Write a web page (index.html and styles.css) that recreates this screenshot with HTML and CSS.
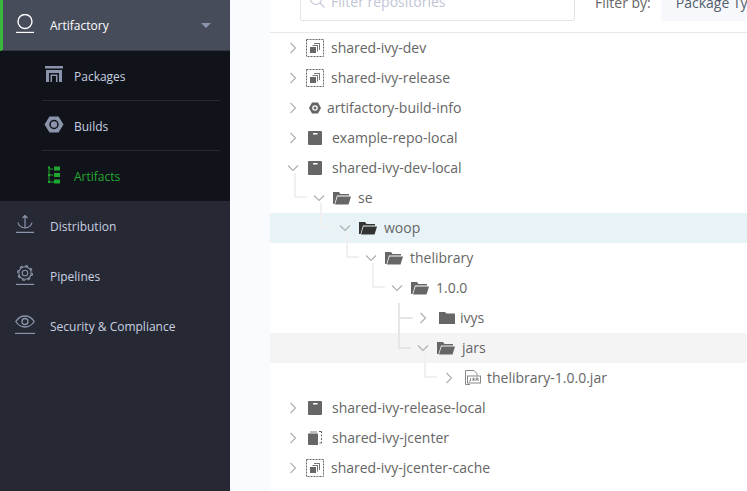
FILE: index.html
```html
<!DOCTYPE html>
<html lang="en">

<head>
    <meta charset="UTF-8">
    <title>Artifacts</title>
    <link rel="stylesheet" href="styles.css">
</head>

<body>
    <svg class="defs" width="0" height="0">
        <symbol id="chev-right" viewBox="0 0 10 14"><path d="M2.500 2 7.500 7 2.500 12" fill="none" stroke="#b0b0b0" stroke-width="1.200"/></symbol>
        <symbol id="chev-down" viewBox="0 0 14 10"><path d="M2 2.500 7 7.500 12 2.500" fill="none" stroke="#b0b0b0" stroke-width="1.200"/></symbol>
        <symbol id="virtual" viewBox="0 0 18 18">
            <rect x=".5" y=".5" width="17" height="17" fill="none" stroke="#666" stroke-dasharray="2 1"/>
            <path d="M8 4h6v7h-1V5H8z" fill="#777"/>
            <path d="M6.500 6H12v6.500H11V7H6.500z" fill="#777"/>
            <rect x="4" y="8" width="6" height="6" fill="#666"/>
        </symbol>
        <symbol id="remote" viewBox="0 0 14 14">
            <path d="M0 2.500h10V14H1a1 1 0 0 1-1-1z" fill="#666"/>
            <path d="M11 .5h2.500v1.500M13.500 3.500v2M13.500 7v2M13.500 10.500v1.500h-2" fill="none" stroke="#666"/>
            <path d="M2 .5h7v1H2z" fill="#777"/>
        </symbol>
        <symbol id="local" viewBox="0 0 14 14"><path d="M1 0h12a1 1 0 0 1 1 1v12a1 1 0 0 1-1 1H1a1 1 0 0 1-1-1V1a1 1 0 0 1 1-1z" fill="#666"/><rect x="5" y="2" width="4.500" height="1.500" fill="#fff"/></symbol>
        <symbol id="build" viewBox="0 0 12 12"><path d="M3 .5h6L12 6 9 11.500H3L0 6z" fill="#666"/><circle cx="6" cy="6" r="2.800" fill="#fff"/><circle cx="6" cy="6" r="1.500" fill="#666"/></symbol>
        <symbol id="folder-open" viewBox="0 0 18 14"><path d="M0 1h6l1.500 2H16v1.500H4L1.500 13H0z" fill="currentColor"/><path d="M4.500 5.500H18L15.500 13.500H2z" fill="currentColor"/></symbol>
        <symbol id="folder" viewBox="0 0 16 12"><path d="M0 0h6l1.500 1.500H16V12H0z" fill="#666"/></symbol>
        <symbol id="jar" viewBox="0 0 17 16">
            <path d="M10 .5H1.500v14H6M10 .5 13 3.500v2" fill="none" stroke="#888"/>
            <rect x="3.500" y="6" width="13" height="7" fill="#fff" stroke="#888"/>
            <path d="M6.500 8v3H5M9 11V8h1v3M9 9.500h1M12 11V8h2v1.500h-2M14 9.500 14.500 11" fill="none" stroke="#777" stroke-width=".8"/>
        </symbol>
    </svg>

    <div class="app">
        <nav class="sidebar">
            <div class="module active">
                <svg class="module-icon" viewBox="0 0 18 19" width="18" height="19"><circle cx="9" cy="7.500" r="7" fill="none" stroke="#fff" stroke-width="1.400"/><path d="M0 18.400h18" stroke="#fff" stroke-width="1.200"/></svg>
                <span>Artifactory</span>
                <i class="caret"></i>
            </div>
            <div class="submenu">
                <div class="sub-item">
                    <svg viewBox="0 0 18 16" width="18" height="16"><path d="M0 0h18v2.500H0z" fill="#8a94ab"/><path d="M1 4h16v12h-3V7H4v9H1z" fill="#8a94ab"/><path d="M5.500 8.500h7V16H11v-6H7v6H5.500z" fill="#8a94ab"/></svg>
                    <span>Packages</span>
                </div>
                <div class="sub-item">
                    <svg viewBox="0 0 19 17" width="19" height="17"><path d="M5 .5h9L19 8.500 14 16.500H5L0 8.500z" fill="#8a94ab"/><circle cx="9.500" cy="8.500" r="4.700" fill="#11131a"/><circle cx="9.500" cy="8.500" r="3.200" fill="#8a94ab"/></svg>
                    <span>Builds</span>
                </div>
                <div class="sub-item current">
                    <svg viewBox="0 0 12 18" width="12" height="18"><path d="M1 1v15h5M1 3h4M1 9h4" fill="none" stroke="#1fa72f"/><path d="M6 .5h6v4H6zM6 7h6v4H6zM6 13.500h6v4H6zM0 .5h2v2H0zM0 8h2v2H0zM0 15h2v2H0z" fill="#1fa72f"/></svg>
                    <span>Artifacts</span>
                </div>
            </div>
            <div class="module">
                <svg class="module-icon" viewBox="0 0 18 18" width="18" height="18"><path d="M9 1v12M6.500 3 9 .5 11.500 3M2 7.500c.5 3 3.500 5.500 7 5.500s6.500-2.500 7-5.500M0 17.400h18" fill="none" stroke="#8a94ab" stroke-width="1.200"/></svg>
                <span>Distribution</span>
            </div>
            <div class="module">
                <svg class="module-icon gear" viewBox="0 0 18 20" width="18" height="20"><circle cx="9" cy="8" r="6.200" fill="none" stroke="#8a94ab" stroke-width="1.100"/><circle cx="9" cy="8" r="7.300" fill="none" stroke="#8a94ab" stroke-width="1.400" stroke-dasharray="3 2.730"/><circle cx="9" cy="8" r="2.800" fill="none" stroke="#8a94ab" stroke-width="1.100"/><path d="M0 19.400h18" stroke="#8a94ab" stroke-width="1.200"/></svg>
                <span>Pipelines</span>
            </div>
            <div class="module">
                <svg class="module-icon wide" viewBox="0 0 20 19" width="20" height="19"><path d="M.8 6.500C3 3 6 1 10 1s7 2 9.200 5.500C17 10 14 12 10 12S3 10 .8 6.500z" fill="none" stroke="#8a94ab" stroke-width="1.300"/><circle cx="10" cy="6.500" r="3" fill="none" stroke="#8a94ab" stroke-width="1.300"/><path d="M0 18.400h20" stroke="#8a94ab" stroke-width="1.200"/></svg>
                <span>Security &amp; Compliance</span>
            </div>
        </nav>

        <main class="content">
            <div class="toolbar">
                <div class="search">
                    <svg viewBox="0 0 15 15" width="15" height="15"><circle cx="6" cy="3" r="5.500" fill="none" stroke="#c4c8d6" stroke-width="1.100"/><path d="M10 7l4.500 4.500" stroke="#c4c8d6" stroke-width="1.100"/></svg>
                    <span>Filter repositories</span>
                </div>
                <span class="filter-label">Filter by:</span>
                <div class="filter-select">Package Type</div>
            </div>

            <div class="tree">
                <div class="row"><svg class="chev"><use href="#chev-right"/></svg><svg class="icon i18"><use href="#virtual"/></svg><span>shared-ivy-dev</span></div>
                <div class="row"><svg class="chev"><use href="#chev-right"/></svg><svg class="icon i18"><use href="#virtual"/></svg><span>shared-ivy-release</span></div>
                <div class="row"><svg class="chev"><use href="#chev-right"/></svg><svg class="icon i12"><use href="#build"/></svg><span>artifactory-build-info</span></div>
                <div class="row"><svg class="chev"><use href="#chev-right"/></svg><svg class="icon i14"><use href="#local"/></svg><span>example-repo-local</span></div>
                <div class="row"><svg class="chev down"><use href="#chev-down"/></svg><svg class="icon i14"><use href="#local"/></svg><span>shared-ivy-dev-local</span></div>
                <div class="row lvl1"><i class="elbow"></i><svg class="chev down"><use href="#chev-down"/></svg><svg class="icon folder"><use href="#folder-open"/></svg><span>se</span></div>
                <div class="row lvl2 selected"><i class="elbow"></i><svg class="chev down"><use href="#chev-down"/></svg><svg class="icon folder dark"><use href="#folder-open"/></svg><span>woop</span></div>
                <div class="row lvl3"><i class="elbow"></i><svg class="chev down"><use href="#chev-down"/></svg><svg class="icon folder"><use href="#folder-open"/></svg><span>thelibrary</span></div>
                <div class="row lvl4"><i class="elbow"></i><svg class="chev down"><use href="#chev-down"/></svg><svg class="icon folder"><use href="#folder-open"/></svg><span>1.0.0</span></div>
                <div class="row lvl5"><i class="elbow branch"></i><svg class="chev"><use href="#chev-right"/></svg><svg class="icon closed"><use href="#folder"/></svg><span>ivys</span></div>
                <div class="row lvl5 hovered"><i class="elbow branch-end"></i><svg class="chev down"><use href="#chev-down"/></svg><svg class="icon folder"><use href="#folder-open"/></svg><span>jars</span></div>
                <div class="row lvl6"><i class="elbow"></i><svg class="chev"><use href="#chev-right"/></svg><svg class="icon file"><use href="#jar"/></svg><span>thelibrary-1.0.0.jar</span></div>
                <div class="row"><svg class="chev"><use href="#chev-right"/></svg><svg class="icon i14"><use href="#local"/></svg><span>shared-ivy-release-local</span></div>
                <div class="row"><svg class="chev"><use href="#chev-right"/></svg><svg class="icon i14"><use href="#remote"/></svg><span>shared-ivy-jcenter</span></div>
                <div class="row"><svg class="chev"><use href="#chev-right"/></svg><svg class="icon i18"><use href="#virtual"/></svg><span>shared-ivy-jcenter-cache</span></div>
            </div>
        </main>
    </div>
</body>

</html>
```

FILE: styles.css
```css
html,
body {
    margin: 0;
    padding: 0;
    height: 100%;
    overflow: hidden;
}

body {
    font-family: "Open Sans", "Noto Sans", sans-serif;
    background-color: #fafbfe;
}

.defs {
    position: absolute;
}

.app {
    display: flex;
    height: 491px;
}

/* sidebar */
.sidebar {
    width: 230px;
    flex-shrink: 0;
    background-color: #262933;
}

.module {
    display: flex;
    align-items: center;
    height: 50px;
    padding-left: 16px;
    box-sizing: border-box;
    color: #c8d0e0;
    font-size: 12px;
}

.module span {
    margin-left: 16px;
}

.module-icon {
    flex-shrink: 0;
    margin-top: -4px;
}

.module-icon.gear {
    margin-top: -2px;
}

.module-icon.wide {
    margin-top: -3px;
    margin-left: -1px;
    margin-right: -1px;
}

.module.active {
    background-color: #474c5b;
    border-left: 3px solid #3db83f;
    padding-left: 13px;
    height: 51px;
    color: #fff;
    position: relative;
    border-bottom: 1px solid #33363f;
}

.module.active .module-icon {
    margin-top: -3px;
}

.caret {
    position: absolute;
    right: 19px;
    top: 23px;
    border-left: 5px solid transparent;
    border-right: 5px solid transparent;
    border-top: 5px solid #8a94ab;
}

.submenu {
    background-color: #11131a;
    padding: 0 10px 0 42px;
    height: 150px;
    box-sizing: border-box;
}

.sub-item {
    display: flex;
    align-items: center;
    height: 50px;
    padding-left: 2px;
    box-sizing: border-box;
    border-bottom: 1px solid #262933;
    color: #c8d0e0;
    font-size: 12px;
}

.sub-item:last-child {
    border-bottom: 0;
}

.sub-item svg {
    width: 20px;
    flex-shrink: 0;
    margin-top: -3px;
}

.sub-item span {
    margin-left: 10px;
    padding-top: 2px;
}

.sub-item.current {
    color: #22a82f;
}

.sub-item.current span {
    padding-top: 0;
}

/* main area */
.content {
    flex: 1;
    min-width: 0;
    margin-left: 40px;
    background-color: #fff;
}

.toolbar {
    display: flex;
    align-items: flex-end;
    height: 32px;
    padding: 0 0 0 30px;
    border-bottom: 1px solid #e8e8ea;
    overflow: hidden;
    color: #666;
    font-size: 14px;
}

.search {
    display: flex;
    align-items: center;
    flex-shrink: 0;
    width: 275px;
    height: 30px;
    margin-bottom: 11px;
    padding-left: 9px;
    box-sizing: border-box;
    background-color: #fff;
    border: 1px solid #e2e4ec;
    border-radius: 2px;
    color: #c0c5d5;
}

.search svg {
    flex-shrink: 0;
    margin-top: -6px;
}

.search span {
    margin-left: 6px;
    margin-top: -10px;
}

.filter-label {
    flex-shrink: 0;
    margin-left: 20px;
    margin-bottom: 11px;
    line-height: 30px;
    transform: translateY(-3px);
    white-space: nowrap;
}

.filter-select {
    flex-shrink: 0;
    width: 120px;
    height: 30px;
    margin-left: 10px;
    margin-bottom: 11px;
    padding-left: 15px;
    line-height: 24px;
    background-color: #f7f8fb;
    color: #555e6e;
    white-space: nowrap;
}

/* repository tree */
.row {
    position: relative;
    display: flex;
    align-items: center;
    height: 30px;
    padding-left: 18px;
    color: #666;
    font-size: 14px;
    white-space: nowrap;
}

.row span {
    margin-top: -1px;
}

.lvl1 {
    padding-left: 44px;
}

.lvl2 {
    padding-left: 70px;
}

.lvl3 {
    padding-left: 96px;
}

.lvl4 {
    padding-left: 122px;
}

.lvl5 {
    padding-left: 148px;
}

.lvl6 {
    padding-left: 174px;
}

.selected {
    background-color: #e8f3f8;
}

.hovered {
    background-color: #f4f4f4;
}

.chev {
    width: 10px;
    height: 14px;
    flex-shrink: 0;
}

.chev.down {
    width: 14px;
    height: 10px;
    margin-left: -2px;
    margin-right: -2px;
}

.icon {
    flex-shrink: 0;
}

.i18 {
    width: 18px;
    height: 18px;
    margin-left: 8px;
    margin-right: 7px;
}

.i14 {
    width: 14px;
    height: 14px;
    margin-left: 10px;
    margin-right: 10px;
}

.i12 {
    width: 12px;
    height: 12px;
    margin-left: 11px;
    margin-right: 6px;
}

.folder {
    width: 18px;
    height: 14px;
    margin-left: 9px;
    margin-right: 7px;
    color: #666;
}

.folder.dark {
    color: #333;
}

.closed {
    width: 16px;
    height: 12px;
    margin-left: 11px;
    margin-right: 5px;
}

.file {
    width: 17px;
    height: 16px;
    margin-left: 10px;
    margin-right: 6px;
}

.elbow {
    position: absolute;
    top: -10px;
    width: 13px;
    height: 25px;
    box-sizing: border-box;
    border-left: 2px solid #f0f0f0;
    border-bottom: 2px solid #f0f0f0;
}

.lvl1 .elbow {
    left: 24px;
}

.lvl2 .elbow {
    left: 50px;
}

.lvl3 .elbow {
    left: 76px;
}

.lvl4 .elbow {
    left: 102px;
}

.lvl5 .elbow {
    left: 128px;
    border-color: #e6e6e6;
}

.lvl6 .elbow {
    left: 154px;
}

.elbow.branch {
    top: 0;
    height: 30px;
    border-bottom: 0;
}

.elbow.branch::after {
    content: "";
    position: absolute;
    left: 0;
    top: 14px;
    width: 13px;
    height: 2px;
    background-color: #e6e6e6;
}

.elbow.branch-end {
    top: 0;
    height: 16px;
}
```
